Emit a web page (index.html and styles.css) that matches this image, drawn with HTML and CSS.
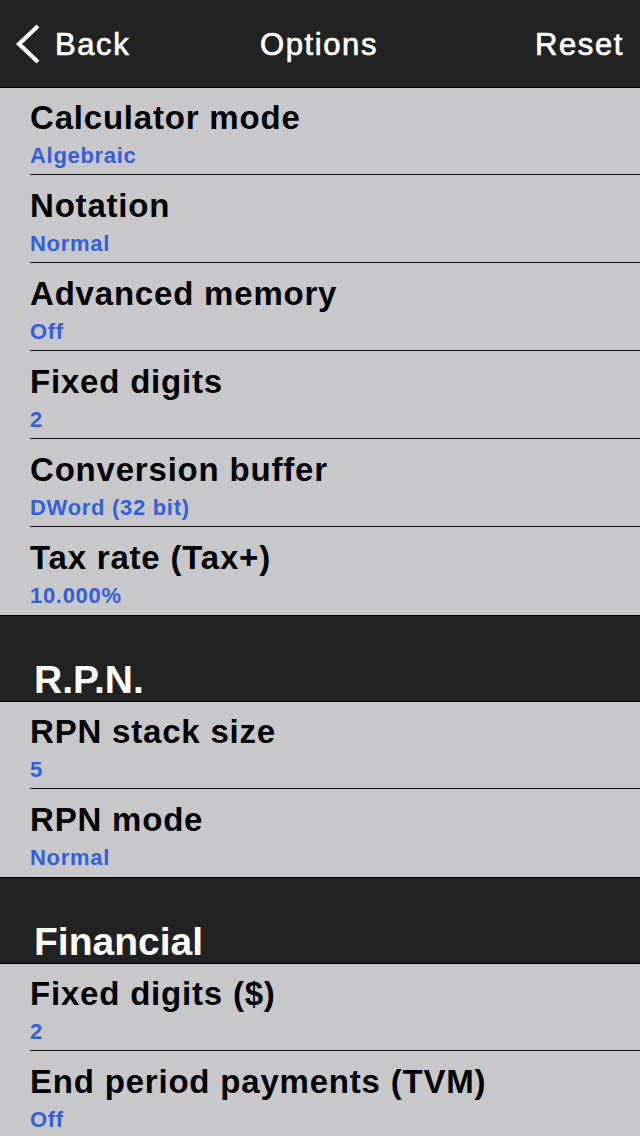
FILE: index.html
```html
<!DOCTYPE html>
<html lang="en">
<head>
	<meta charset="UTF-8">
	<title>Options</title>
	<link rel="stylesheet" href="styles.css">
</head>
<body>
	<div class="navbar">
		<div class="nav-back">
			<svg class="chevron" width="28" height="40" viewBox="0 0 28 40">
				<polyline points="24,2 5,20 24,38" fill="none" stroke="#fff" stroke-width="4.2" stroke-linecap="butt" stroke-linejoin="miter"/>
			</svg>
			<span>Back</span>
		</div>
		<div class="nav-title">Options</div>
		<div class="nav-reset">Reset</div>
	</div>

	<div class="group">
		<div class="row"><div class="title">Calculator mode</div><div class="value">Algebraic</div></div>
		<div class="row"><div class="title">Notation</div><div class="value">Normal</div></div>
		<div class="row"><div class="title">Advanced memory</div><div class="value">Off</div></div>
		<div class="row"><div class="title">Fixed digits</div><div class="value">2</div></div>
		<div class="row"><div class="title">Conversion buffer</div><div class="value">DWord (32 bit)</div></div>
		<div class="row"><div class="title">Tax rate (Tax+)</div><div class="value">10.000%</div></div>
	</div>

	<div class="section">R.P.N.</div>
	<div class="group">
		<div class="row"><div class="title">RPN stack size</div><div class="value">5</div></div>
		<div class="row"><div class="title">RPN mode</div><div class="value">Normal</div></div>
	</div>

	<div class="section">Financial</div>
	<div class="group">
		<div class="row"><div class="title">Fixed digits ($)</div><div class="value">2</div></div>
		<div class="row"><div class="title">End period payments (TVM)</div><div class="value">Off</div></div>
	</div>
</body>
</html>
```

FILE: styles.css
```css
body{
	margin: 0;
	background: #c8c8ca;
	font-family: "Liberation Sans", Arial, sans-serif;
	overflow: hidden;
}
.navbar{
	display: flex;
	align-items: center;
	justify-content: space-between;
	height: 87px;
	background: #222222;
	border-bottom: 1px solid #000;
	color: #fff;
	font-size: 31px;
	line-height: 31px;
	letter-spacing: 1.6px;
	-webkit-text-stroke: 0.7px #fff;
	padding: 1px 16px 0 14px;
	box-sizing: border-box;
	height: 88px;
}
.nav-back{
	display: flex;
	align-items: center;
	gap: 13px;
	width: 140px;
}
.chevron{
	-webkit-text-stroke: 0;
}
.nav-reset{
	width: 140px;
	text-align: right;
}
.group{
	display: flex;
	flex-direction: column;
}
.row{
	height: 87px;
	padding-left: 30px;
	display: flex;
	flex-direction: column;
}
.row:not(:last-child){
	height: 88px;
	box-sizing: border-box;
	padding-bottom: 1px;
	background-image: linear-gradient(#111, #111);
	background-repeat: no-repeat;
	background-size: 100% 1px;
	background-position: 0 100%;
	background-origin: content-box;
}
.title{
	margin-top: 14px;
	font-size: 33px;
	line-height: 32px;
	color: #000;
	font-weight: bold;
	letter-spacing: 0.8px;
}
.value{
	margin-top: 12px;
	font-size: 22px;
	line-height: 20px;
	color: #3360d8;
	font-weight: bold;
	letter-spacing: 0.7px;
}
.section{
	height: 83px;
	background: #222222;
	border-top: 1px solid #000;
	border-bottom: 1px solid #000;
	color: #fff;
	font-weight: bold;
	font-size: 39px;
	line-height: 38px;
	padding-left: 34px;
	padding-bottom: 2px;
	display: flex;
	align-items: flex-end;
}
```
